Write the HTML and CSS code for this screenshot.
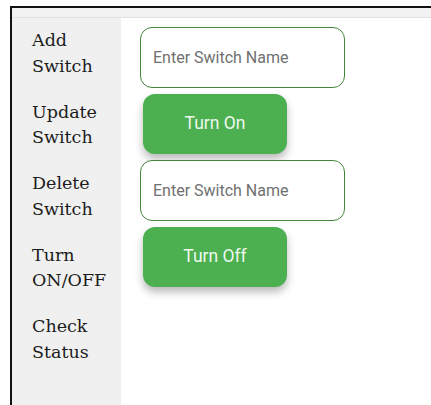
FILE: index.html
```html
<!DOCTYPE html>
<html lang="en">
<head>
<meta charset="utf-8">
<title>Switches</title>
<link rel="stylesheet" href="styles.css">
</head>
<body>
<div class="frame">
  <div class="topbar"></div>
  <div class="layout">
    <nav class="sidebar">
      <div class="nav-item">Add<br>Switch</div>
      <div class="nav-item">Update<br>Switch</div>
      <div class="nav-item">Delete<br>Switch</div>
      <div class="nav-item">Turn<br>ON/OFF</div>
      <div class="nav-item">Check<br>Status</div>
    </nav>
    <main class="content">
      <input class="field" type="text" placeholder="Enter Switch Name">
      <button class="btn">Turn On</button>
      <input class="field" type="text" placeholder="Enter Switch Name">
      <button class="btn">Turn Off</button>
    </main>
  </div>
</div>
</body>
</html>
```
FILE: styles.css
```css
html, body {
  margin: 0;
  height: 100%;
  background: #ffffff;
}

body {
  padding: 6px 0 0 10px;
  box-sizing: border-box;
}

.frame {
  height: 100%;
  border-top: 2px solid #111111;
  border-left: 2px solid #111111;
  display: flex;
  flex-direction: column;
}

.topbar {
  height: 9px;
  background: #f2f2f2;
  border-bottom: 1px solid #e2e2e2;
  flex: none;
}

.layout {
  flex: 1;
  display: flex;
}

.sidebar {
  width: 109px;
  background: #f0f0f0;
  padding: 10px 0 0 20px;
  box-sizing: border-box;
  display: flex;
  flex-direction: column;
  gap: 20.5px;
}

.nav-item {
  font-family: "DejaVu Serif", "Liberation Serif", serif;
  font-size: 17.5px;
  line-height: 25.5px;
  color: #1c1c1c;
}

.content {
  padding: 9px 0 0 19px;
  display: flex;
  flex-direction: column;
  align-items: flex-start;
}

.field {
  width: 205px;
  height: 61px;
  box-sizing: border-box;
  border: 1.6px solid #428639;
  border-radius: 12px;
  padding: 0 12px;
  margin: 0 0 6px 0;
  font-family: Roboto, "Noto Sans", sans-serif;
  font-size: 16px;
  color: #333333;
  background: #ffffff;
  outline: none;
}

.field::placeholder {
  color: #707070;
}

.btn {
  width: 144px;
  height: 60px;
  margin: 0 0 6px 3px;
  border: none;
  border-radius: 12px;
  background: #4caf50;
  color: #eef8ee;
  font-family: Roboto, "Noto Sans", sans-serif;
  font-size: 17.5px;
  padding: 0 0 3px;
  box-shadow: 0 5px 9px rgba(0, 0, 0, 0.28);
  cursor: pointer;
}
```
